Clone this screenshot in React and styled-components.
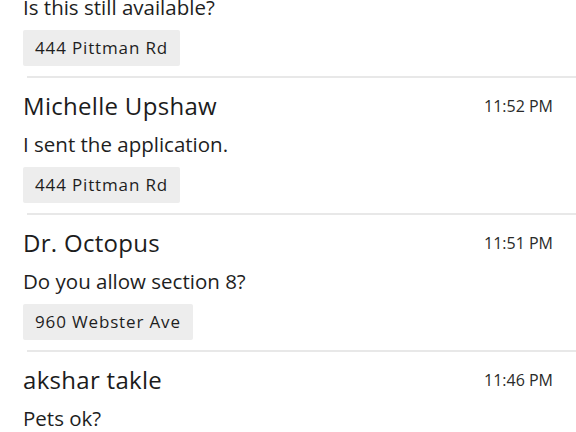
import React from "react";
import styled, { createGlobalStyle } from "styled-components";

const GlobalStyle = createGlobalStyle`
  body {
    margin: 0;
    background: #fff;
    font-family: "Open Sans", "Liberation Sans", sans-serif;
    color: #1e1e1e;
    overflow: hidden;
  }
`;

const List = styled.div`
  width: 576px;
  height: 432px;
  overflow: hidden;
`;

const Scroller = styled.div`
  margin-top: -5px;
`;

const Item = styled.div`
  padding: ${(p) => (p.$partial ? "0" : "14px")} 23px 10px 23px;
`;

const Divider = styled.div`
  height: 2px;
  margin-left: 27px;
  background: #e8e8e8;
`;

const Header = styled.div`
  display: flex;
  justify-content: space-between;
  align-items: flex-start;
  height: 28px;
`;

const Name = styled.div`
  font-size: 24px;
  line-height: 28px;
  letter-spacing: 0.3px;
  color: #1c1c1c;
`;

const Time = styled.div`
  margin-top: 4px;
  font-size: 16px;
  line-height: 20px;
  color: #2a2a2a;
`;

const Message = styled.div`
  font-size: 20.5px;
  line-height: 24px;
  margin-top: ${(p) => (p.$partial ? "0" : "12px")};
  color: #1e1e1e;
`;

const Tag = styled.div`
  display: inline-block;
  margin-top: 11px;
  background: #ededed;
  border-radius: 2px;
  padding: 0 12px;
  height: 36px;
  line-height: 36px;
  font-size: 17px;
  letter-spacing: 0.85px;
  color: #1e1e1e;
`;

const messages = [
  { text: "Is this still available?", tag: "444 Pittman Rd", partial: true },
  { name: "Michelle Upshaw", time: "11:52 PM", text: "I sent the application.", tag: "444 Pittman Rd" },
  { name: "Dr. Octopus", time: "11:51 PM", text: "Do you allow section 8?", tag: "960 Webster Ave" },
  { name: "akshar takle", time: "11:46 PM", text: "Pets ok?" },
];

export default function App() {
  return (
    <>
      <GlobalStyle />
      <List>
        <Scroller>
          {messages.map((m, key) => (
            <React.Fragment key={key}>
              <Item $partial={m.partial}>
                {!m.partial && (
                  <Header>
                    <Name>{m.name}</Name>
                    <Time>{m.time}</Time>
                  </Header>
                )}
                <Message $partial={m.partial}>{m.text}</Message>
                {m.tag && <Tag>{m.tag}</Tag>}
              </Item>
              {key < messages.length - 1 && <Divider />}
            </React.Fragment>
          ))}
        </Scroller>
      </List>
    </>
  );
}
